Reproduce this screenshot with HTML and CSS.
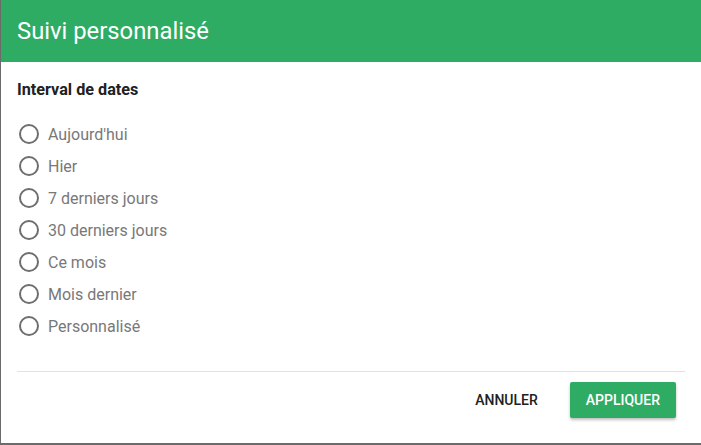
FILE: index.html
```html
<!DOCTYPE html>
<html lang="fr">
<head>
<meta charset="utf-8">
<link rel="stylesheet" href="styles.css">
</head>
<body>
<div class="dialog">
  <div class="header">Suivi personnalisé</div>
  <div class="content">
    <div class="section-title">Interval de dates</div>
    <div class="radios">
      <label class="radio"><span class="circle"></span><span>Aujourd'hui</span></label>
      <label class="radio"><span class="circle"></span><span>Hier</span></label>
      <label class="radio"><span class="circle"></span><span>7 derniers jours</span></label>
      <label class="radio"><span class="circle"></span><span>30 derniers jours</span></label>
      <label class="radio"><span class="circle"></span><span>Ce mois</span></label>
      <label class="radio"><span class="circle"></span><span>Mois dernier</span></label>
      <label class="radio"><span class="circle"></span><span>Personnalisé</span></label>
    </div>
  </div>
  <div class="divider"></div>
  <div class="actions">
    <button class="btn btn-flat">Annuler</button>
    <button class="btn btn-primary">Appliquer</button>
  </div>
</div>
</body>
</html>
```

FILE: styles.css
```css
html, body {
  margin: 0;
  padding: 0;
  height: 100%;
}
body {
  background: #6b6b6b;
  font-family: Roboto, "Liberation Sans", sans-serif;
  overflow: hidden;
}
.dialog {
  margin-left: 1px;
  width: 700px;
  height: 443px;
  background: #fff;
  display: flex;
  flex-direction: column;
}
.header {
  height: 62px;
  background: #2fac64;
  color: #fff;
  font-size: 23.8px;
  padding-left: 16px;
  display: flex;
  align-items: center;
  box-sizing: border-box;
  padding-bottom: 1px;
}
.content {
  padding: 18px 16px 0 16px;
  flex: 1;
}
.section-title {
  font-size: 16.2px;
  font-weight: 700;
  color: #212121;
  line-height: 20px;
}
.radios {
  margin-top: 18px;
  display: flex;
  flex-direction: column;
}
.radio {
  height: 32px;
  display: flex;
  align-items: center;
  color: #787878;
  font-size: 16px;
}
.circle {
  width: 16px;
  height: 16px;
  border: 2px solid #6f6f6f;
  border-radius: 50%;
  margin-left: 2px;
  margin-right: 9px;
}
.divider {
  height: 1px;
  background: #e2e2e2;
  margin: 0 16px 0 16px;
}
.actions {
  display: flex;
  justify-content: flex-end;
  align-items: center;
  gap: 16px;
  padding: 10px 25px 25px 0;
}
.btn {
  font-family: Roboto, "Liberation Sans", sans-serif;
  font-size: 14px;
  font-weight: 500;
  text-transform: uppercase;
  border: none;
  height: 36px;
  border-radius: 2px;
  padding: 0 16px;
  cursor: pointer;
}
.btn-flat {
  background: transparent;
  color: #212121;
}
.btn-primary {
  background: #2fac64;
  color: #fff;
  box-shadow: 0 2px 3px rgba(0,0,0,0.25);
}
```
